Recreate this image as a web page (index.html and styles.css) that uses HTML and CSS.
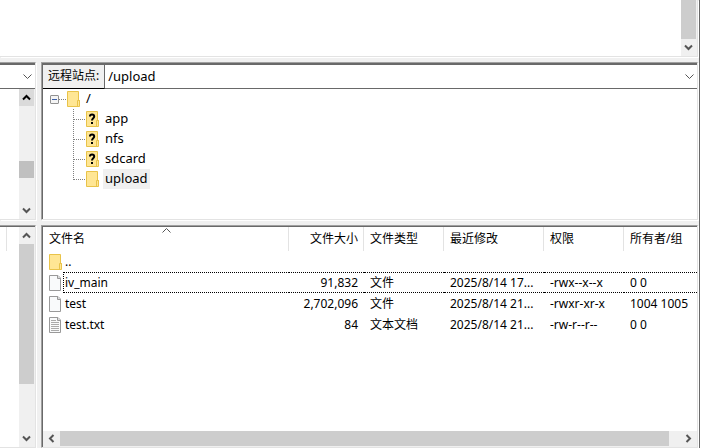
FILE: index.html
```html
<!DOCTYPE html>
<html lang="zh-CN">
<head>
    <meta charset="UTF-8">
    <meta name="viewport" content="width=device-width, initial-scale=1.0">
    <title>远程站点</title>
    <link rel="stylesheet" href="styles.css">
</head>
<body>
    <svg class="defs" aria-hidden="true">
        <symbol id="folder" viewBox="0 0 13 16">
            <path d="M0.5 0.5H11.5V9.5H12.5V15.5H0.5Z" fill="#ffe694" stroke="#e9c349"/>
            <path d="M10.5 15V9.5H12.5V15" fill="#ffe694" stroke="#e9c349"/>
        </symbol>
        <symbol id="unknown" viewBox="0 0 13 16">
            <use href="#folder"/>
            <path d="M4 5.5V5C4 3.8 5 3.5 6 3.5S8.2 4 8.2 5.4C8.2 7.2 6 7.2 6 9.5" fill="none" stroke="#000" stroke-width="2"/>
            <path d="M5 11H7V13H5Z" fill="#000"/>
        </symbol>
        <symbol id="file" viewBox="0 0 13 16">
            <path d="M0.5 0.5H9L11.5 3V15.5H0.5Z" fill="#f9fafb" stroke="#999"/>
            <path d="M8.5 0.5V3.5H11.5" fill="#ddd" stroke="#999"/>
        </symbol>
        <symbol id="textfile" viewBox="0 0 13 16">
            <use href="#file"/>
            <path d="M2 3.5H7M2 5.5H10M2 7.5H10M2 9.5H10M2 11.5H10M2 13.5H10" stroke="#aaa"/>
        </symbol>
        <symbol id="arrow" viewBox="0 0 9 7">
            <path d="M1 1.5L4.5 5L8 1.5" fill="none" stroke="currentColor" stroke-width="2"/>
        </symbol>
        <symbol id="chevron" viewBox="0 0 9 6">
            <path d="M0.5 0.5L4.5 4.5L8.5 0.5" fill="none" stroke="currentColor"/>
        </symbol>
    </svg>

    <main class="window">
        <section class="panel log">
            <div class="content"></div>
            <div class="scrollbar">
                <div class="thumb grow"></div>
                <button class="down" aria-label="向下滚动"><svg><use href="#arrow"/></svg></button>
            </div>
        </section>

        <section class="panel tree-panel">
            <div class="path">
                <select aria-label="本地站点"><option></option></select>
                <svg class="chevron"><use href="#chevron"/></svg>
            </div>
            <div class="body">
                <div class="content"></div>
                <div class="scrollbar">
                    <button class="up hover" aria-label="向上滚动"><svg><use href="#arrow"/></svg></button>
                    <div class="track above"></div>
                    <div class="thumb small"></div>
                    <div class="track below"></div>
                    <button class="down" aria-label="向下滚动"><svg><use href="#arrow"/></svg></button>
                </div>
            </div>
        </section>

        <section class="panel tree-panel sunken">
            <div class="path">
                <label for="remote">远程站点:</label>
                <select id="remote"><option>/upload</option></select>
                <svg class="chevron"><use href="#chevron"/></svg>
            </div>
            <div class="body">
                <ul class="tree">
                    <li>
                        <div class="node">
                            <button class="toggle" aria-label="折叠"></button>
                            <span class="branch"></span>
                            <svg class="icon"><use href="#folder"/></svg>
                            <span class="name">/</span>
                        </div>
                        <ul class="children">
                            <li class="node"><span class="branch"></span><svg class="icon"><use href="#unknown"/></svg><span class="name">app</span></li>
                            <li class="node"><span class="branch"></span><svg class="icon"><use href="#unknown"/></svg><span class="name">nfs</span></li>
                            <li class="node"><span class="branch"></span><svg class="icon"><use href="#unknown"/></svg><span class="name">sdcard</span></li>
                            <li class="node"><span class="branch"></span><svg class="icon"><use href="#folder"/></svg><span class="name selected">upload</span></li>
                        </ul>
                    </li>
                </ul>
            </div>
        </section>

        <section class="panel list-panel">
            <div class="body">
                <div class="content"><div class="divider"></div></div>
                <div class="scrollbar">
                    <button class="up" aria-label="向上滚动"><svg><use href="#arrow"/></svg></button>
                    <div class="thumb large"></div>
                    <div class="track"></div>
                    <button class="down" aria-label="向下滚动"><svg><use href="#arrow"/></svg></button>
                </div>
            </div>
        </section>

        <section class="panel list-panel sunken">
            <div class="content">
                <table class="files">
                    <colgroup>
                        <col class="col-name">
                        <col class="col-size">
                        <col class="col-type">
                        <col class="col-date">
                        <col class="col-mode">
                        <col>
                    </colgroup>
                    <thead>
                        <tr>
                            <th>文件名<svg class="sort"><use href="#chevron"/></svg></th>
                            <th class="size">文件大小</th>
                            <th>文件类型</th>
                            <th>最近修改</th>
                            <th>权限</th>
                            <th>所有者/组</th>
                        </tr>
                    </thead>
                    <tbody>
                        <tr>
                            <td><div class="file"><svg class="icon"><use href="#folder"/></svg><span>..</span></div></td>
                            <td class="size"></td>
                            <td></td>
                            <td></td>
                            <td></td>
                            <td></td>
                        </tr>
                        <tr class="focused">
                            <td><div class="file"><svg class="icon"><use href="#file"/></svg><span>iv_main</span></div></td>
                            <td class="size">91,832</td>
                            <td>文件</td>
                            <td>2025/8/14 17...</td>
                            <td>-rwx--x--x</td>
                            <td>0 0</td>
                        </tr>
                        <tr>
                            <td><div class="file"><svg class="icon"><use href="#file"/></svg><span>test</span></div></td>
                            <td class="size">2,702,096</td>
                            <td>文件</td>
                            <td>2025/8/14 21...</td>
                            <td>-rwxr-xr-x</td>
                            <td>1004 1005</td>
                        </tr>
                        <tr>
                            <td><div class="file"><svg class="icon"><use href="#textfile"/></svg><span>test.txt</span></div></td>
                            <td class="size">84</td>
                            <td>文本文档</td>
                            <td>2025/8/14 21...</td>
                            <td>-rw-r--r--</td>
                            <td>0 0</td>
                        </tr>
                    </tbody>
                </table>
            </div>
            <div class="scrollbar horizontal">
                <button class="left" aria-label="向左滚动"><svg><use href="#arrow"/></svg></button>
                <div class="thumb grow"></div>
                <div class="track gap"></div>
                <button class="right" aria-label="向右滚动"><svg><use href="#arrow"/></svg></button>
            </div>
        </section>
    </main>
</body>
</html>
```

FILE: styles.css
```css
* {
    box-sizing: border-box;
}
body {
    margin: 0;
    padding-right: 3px;
    background: #fff;
    color: #000;
    font-family: "Noto Sans", "Noto Sans CJK SC", sans-serif;
    font-size: 12px;
    line-height: 20px;
}
.defs {
    position: absolute;
    width: 0;
    height: 0;
}
svg {
    display: block;
    flex: none;
}
button {
    padding: 0;
    border: none;
    background: none;
}
.window {
    display: grid;
    grid-template-columns: 36px 1fr;
    grid-template-rows: 57px auto 1fr;
    gap: 5px;
    height: 100vh;
    padding-right: 1px;
    border-right: 1px solid #696969;
    background: #f0f0f0;
    overflow: hidden;
}

/* panels */
.panel {
    display: flex;
    flex-direction: column;
    min-width: 0;
    min-height: 0;
    background: #fff;
    border-right: 1px solid #e3e3e3;
    border-bottom: 1px solid #e3e3e3;
    box-shadow: 1px 1px 0 #fff;
}
.log {
    grid-column: 1 / 3;
    flex-direction: row;
}
.tree-panel,
.list-panel {
    border-top: 1px solid #a0a0a0;
}
.sunken {
    border-left: 1px solid #a0a0a0;
}
.sunken > * {
    border-left: 1px solid #696969;
}
.path,
.list-panel > :first-child {
    border-top: 1px solid #696969;
}
.body {
    display: flex;
    flex: 1;
    min-height: 130px;
}
.content {
    flex: 1;
    min-width: 0;
}

/* path bar */
.path {
    position: relative;
    display: flex;
    height: 26px;
    border-top-width: 2px;
}
.path label {
    padding: 0 5px;
    line-height: 22px;
    background: #f0f0f0;
    border-right: 1px solid #696969;
    border-bottom: 1px solid #000;
}
.path select {
    flex: 1;
    min-width: 0;
    padding: 0 3px 2px;
    border: none;
    border-bottom: 1px solid #696969;
    border-radius: 0;
    background: #fff;
    color: #000;
    font: inherit;
    font-size: 13px;
    appearance: none;
}
.path .chevron {
    position: absolute;
    right: 3px;
    top: 9px;
    width: 9px;
    height: 6px;
    color: #555;
    pointer-events: none;
}

/* scrollbars */
.scrollbar {
    display: flex;
    flex-direction: column;
    flex: none;
    width: 16px;
    padding-right: 1px;
    background: #f0f0f0;
}
.scrollbar button {
    display: flex;
    align-items: center;
    justify-content: center;
    height: 17px;
    color: #555;
}
.scrollbar svg {
    width: 9px;
    height: 7px;
}
.scrollbar .hover {
    background: #dadada;
    color: #000;
}
.up svg {
    transform: rotate(180deg);
}
.left svg {
    transform: rotate(90deg);
}
.right svg {
    transform: rotate(-90deg);
}
.thumb {
    background: #cdcdcd;
}
.grow,
.track {
    flex: 1;
}
.above {
    flex: 7;
}
.below {
    flex: 3;
}
.small {
    height: 17px;
    background: #c0c0c0;
}
.large {
    height: 140px;
}
.horizontal {
    flex-direction: row;
    width: auto;
    height: 16px;
    padding: 0 0 1px;
}
.horizontal button {
    width: 17px;
    height: 15px;
}
.horizontal .gap {
    flex: 0 0 11px;
}

/* directory tree */
.tree,
.children {
    margin: 0;
    padding: 0;
    list-style: none;
}
.tree {
    padding-left: 7px;
    font-size: 13px;
    line-height: 18px;
}
.node {
    display: flex;
    align-items: center;
    height: 20px;
}
.icon {
    width: 13px;
    height: 16px;
}
.toggle {
    width: 9px;
    height: 9px;
    background: linear-gradient(#3c5fa8, #3c5fa8) center / 5px 1px no-repeat #f4f4f4;
    border: 1px solid #919191;
    border-radius: 1px;
}
.branch {
    width: 7px;
    margin-right: 1px;
    border-top: 1px dotted #808080;
}
.children {
    margin-left: 23px;
    background: repeating-linear-gradient(#808080 0 1px, transparent 1px 2px) 0 0 / 1px 71px no-repeat;
}
.children .branch {
    width: 12px;
}
.name {
    height: 20px;
    padding: 0 2px;
    margin-left: 4px;
}
.selected {
    background: #f0f0f0;
}

/* file list */
.divider {
    width: 7px;
    height: 24px;
    border-right: 1px solid #e3e3e3;
}
.files {
    width: 100%;
    table-layout: fixed;
    border-spacing: 0;
}
.col-name {
    width: 246px;
}
.col-size {
    width: 75px;
}
.col-type,
.col-mode {
    width: 80px;
}
.col-date {
    width: 100px;
}
.files th {
    position: relative;
    height: 24px;
    padding: 0 5px 0 6px;
    border-right: 1px solid #e3e3e3;
    font-weight: normal;
    text-align: left;
}
.files th:last-child {
    border-right: none;
}
.files td {
    height: 21px;
    padding: 0 6px;
    line-height: 19px;
    border: 0 dotted #000;
    white-space: nowrap;
}
.files .size {
    text-align: right;
}
.files td:first-child {
    padding-right: 0;
}
.sort {
    position: absolute;
    left: calc(50% - 4px);
    top: 0;
    width: 9px;
    height: 6px;
    color: #555;
    transform: rotate(180deg);
}
.file {
    display: flex;
    align-items: center;
    height: 21px;
    gap: 1px;
}
.file span {
    flex: 1;
    padding-left: 2px;
}
.focused td:not(:first-child) {
    border-width: 1px 0;
}
.focused span {
    border: 1px dotted #000;
    border-right: none;
    padding-left: 1px;
}
```
